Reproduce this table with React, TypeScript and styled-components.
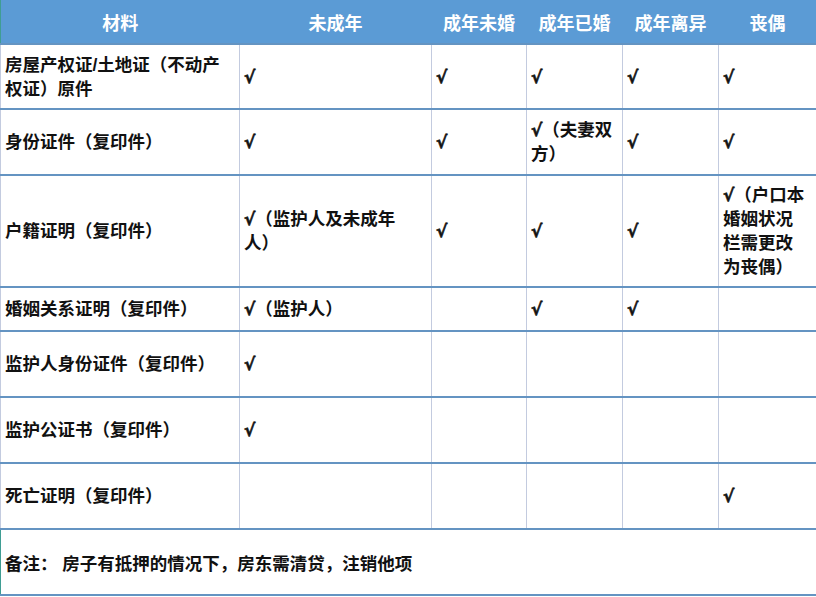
import styled, { createGlobalStyle } from "styled-components";

const GlobalStyle = createGlobalStyle`
  html, body {
    margin: 0;
    padding: 0;
    background: #ffffff;
  }
`;

const Sheet = styled.table`
  width: 816px;
  table-layout: fixed;
  border-collapse: collapse;
  border-left: 1px solid #3f9d93;
  font-family: "Liberation Sans", "Noto Sans CJK SC", sans-serif;
  font-weight: 700;
  font-size: 17.5px;
  color: #111111;
`;

const HeadCell = styled.th`
  height: 43px;
  padding: 0;
  background: #5b9bd5;
  color: #ffffff;
  font-size: 18px;
  font-weight: 700;
  text-align: center;
  vertical-align: middle;
`;

const Cell = styled.td<{ $h: number; $last?: boolean }>`
  height: ${(p) => p.$h - 2}px;
  padding: 0 4px;
  line-height: 24px;
  vertical-align: middle;
  text-align: left;
  border-top: 2px solid #6494c2;
  border-bottom: 2px solid #6494c2;
  border-left: 1px solid #c3cbdf;
  border-right: ${(p) => (p.$last ? "2px solid #6494c2" : "1px solid #c3cbdf")};
`;

const Check = styled.span`
  font-family: "DejaVu Sans", sans-serif;
  font-size: 17px;
  font-weight: 700;
  -webkit-text-stroke: 0.6px #111111;
`;

const NoteCell = styled.td`
  height: 64px;
  padding: 0 4px;
  vertical-align: middle;
  border-top: 2px solid #6494c2;
  border-bottom: 2px solid #6494c2;
  border-right: 1px solid #d4dbe9;
`;

const headers = ["材料", "未成年", "成年未婚", "成年已婚", "成年离异", "丧偶"];
const widths = [239, 192, 95, 96, 96, 98];

type Row = { h: number; cells: string[][] };

const rows: Row[] = [
  {
    h: 65,
    cells: [["房屋产权证/土地证（不动产", "权证）原件"], ["√"], ["√"], ["√"], ["√"], ["√"]],
  },
  {
    h: 66,
    cells: [["身份证件（复印件）"], ["√"], ["√"], ["√（夫妻双", "方）"], ["√"], ["√"]],
  },
  {
    h: 112,
    cells: [
      ["户籍证明（复印件）"],
      ["√（监护人及未成年", "人）"],
      ["√"],
      ["√"],
      ["√"],
      ["√（户口本", "婚姻状况", "栏需更改", "为丧偶）"],
    ],
  },
  {
    h: 44,
    cells: [["婚姻关系证明（复印件）"], ["√（监护人）"], [], ["√"], ["√"], []],
  },
  { h: 66, cells: [["监护人身份证件（复印件）"], ["√"], [], [], [], []] },
  { h: 66, cells: [["监护公证书（复印件）"], ["√"], [], [], [], []] },
  { h: 66, cells: [["死亡证明（复印件）"], [], [], [], [], ["√"]] },
];

function Line({ text }: { text: string }) {
  if (text.startsWith("√")) {
    return (
      <>
        <Check>√</Check>
        {text.slice(1)}
      </>
    );
  }
  return <>{text}</>;
}

export default function App() {
  return (
    <>
      <GlobalStyle />
      <Sheet>
        <colgroup>
          {widths.map((w, i) => (
            <col key={i} style={{ width: w }} />
          ))}
        </colgroup>
        <thead>
          <tr>
            {headers.map((h) => (
              <HeadCell key={h}>{h}</HeadCell>
            ))}
          </tr>
        </thead>
        <tbody>
          {rows.map((row, r) => (
            <tr key={r}>
              {row.cells.map((lines, c) => (
                <Cell key={c} $h={row.h} $last={c === row.cells.length - 1}>
                  {lines.map((line, i) => (
                    <span key={i}>
                      {i > 0 && <br />}
                      <Line text={line} />
                    </span>
                  ))}
                </Cell>
              ))}
            </tr>
          ))}
          <tr>
            <NoteCell colSpan={6}>备注：&nbsp;房子有抵押的情况下，房东需清贷，注销他项</NoteCell>
          </tr>
        </tbody>
      </Sheet>
    </>
  );
}
